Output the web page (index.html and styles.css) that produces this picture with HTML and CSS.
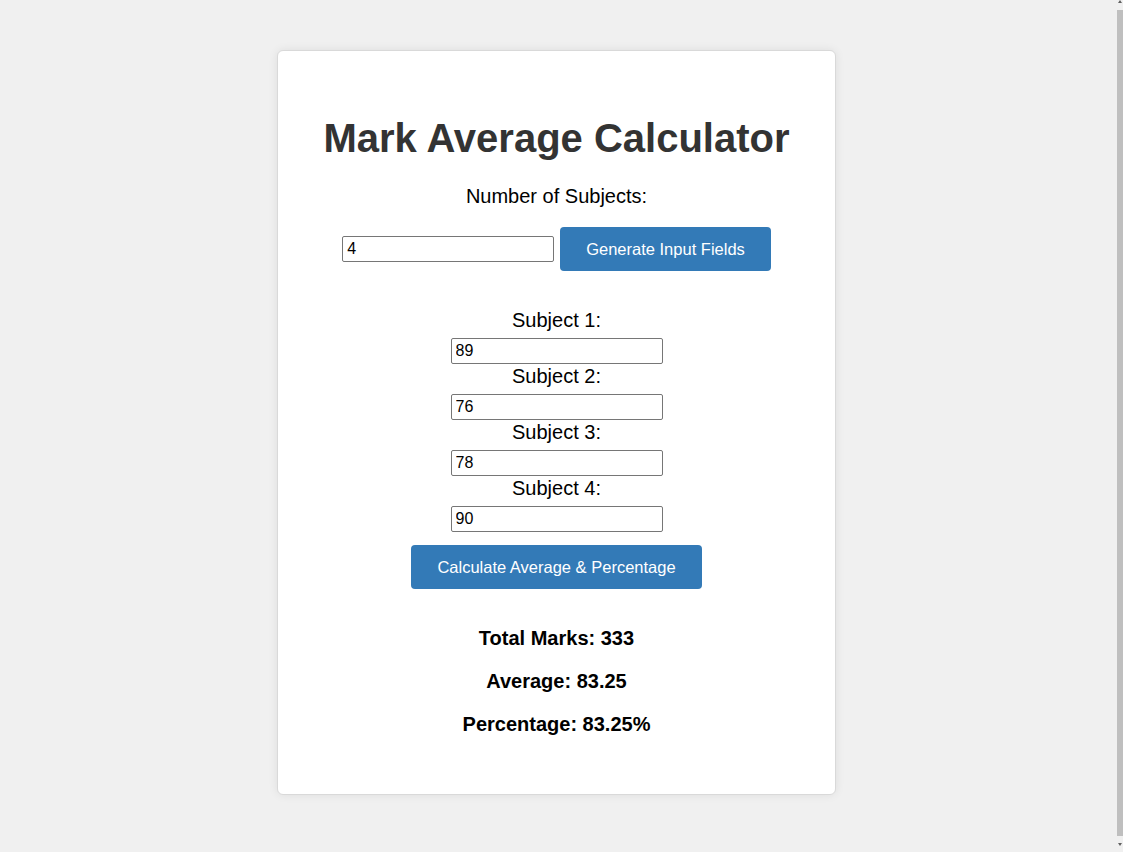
FILE: index.html
```html
<!DOCTYPE html>
<html lang="en">
<head>
<meta charset="utf-8">
<title>Mark Average Calculator</title>
<link rel="stylesheet" href="styles.css">
</head>
<body>
<div class="card">
  <h1 class="title">Mark Average Calculator</h1>
  <label class="count-label" for="count">Number of Subjects:</label>
  <div class="count-row">
    <input id="count" class="field field-count" type="text" value="4">
    <button class="btn btn-generate" type="button">Generate Input Fields</button>
  </div>
  <div class="subjects">
    <div class="subject">
      <label class="subject-label" for="s1">Subject 1:</label>
      <input id="s1" class="field" type="text" value="89">
    </div>
    <div class="subject">
      <label class="subject-label" for="s2">Subject 2:</label>
      <input id="s2" class="field" type="text" value="76">
    </div>
    <div class="subject">
      <label class="subject-label" for="s3">Subject 3:</label>
      <input id="s3" class="field" type="text" value="78">
    </div>
    <div class="subject">
      <label class="subject-label" for="s4">Subject 4:</label>
      <input id="s4" class="field" type="text" value="90">
    </div>
  </div>
  <button class="btn btn-calc" type="button">Calculate Average &amp; Percentage</button>
  <div class="results">
    <p class="result">Total Marks: 333</p>
    <p class="result">Average: 83.25</p>
    <p class="result">Percentage: 83.25%</p>
  </div>
</div>
<div class="scrollbar" aria-hidden="true">
  <div class="sb-btn sb-btn-up"><span class="sb-arrow-up"></span></div>
  <div class="sb-thumb"></div>
  <div class="sb-btn sb-btn-down"><span class="sb-arrow-down"></span></div>
</div>
</body>
</html>
```

FILE: styles.css
```css
html {
  overflow: hidden;
}

body {
  margin: 0;
  padding-right: 10px;
  background: #f0f0f0;
  font-family: "Liberation Sans", Arial, sans-serif;
  color: #000;
}

.card {
  box-sizing: border-box;
  width: 559px;
  margin: 50px auto 63px;
  padding: 40px 0 58px;
  background: #fff;
  border: 1px solid #d9d9d9;
  border-radius: 6px;
  box-shadow: 0 0 10px rgba(0, 0, 0, 0.08);
  display: flex;
  flex-direction: column;
  align-items: center;
  text-align: center;
}

.title {
  margin: 24px 0 0;
  font-size: 40px;
  font-weight: bold;
  color: #333;
  line-height: 46px;
}

.count-label {
  display: block;
  margin-top: 24px;
  font-size: 20px;
  line-height: 23px;
}

.count-row {
  margin-top: 19px;
  display: flex;
  align-items: center;
  gap: 6px;
}

.field {
  box-sizing: border-box;
  width: 212px;
  height: 26px;
  margin: 0;
  padding: 0 4px;
  border: 1px solid #767676;
  border-radius: 2px;
  font-family: "Liberation Sans", Arial, sans-serif;
  font-size: 16px;
  color: #000;
  background: #fff;
}

.btn {
  box-sizing: border-box;
  height: 44px;
  padding: 0 26px;
  border: none;
  border-radius: 4px;
  background: #337ab7;
  color: #fff;
  font-family: "Liberation Sans", Arial, sans-serif;
  font-size: 16.5px;
}

.subjects {
  margin-top: 38px;
  display: flex;
  flex-direction: column;
  align-items: center;
  gap: 1px;
}

.subject {
  display: flex;
  flex-direction: column;
  align-items: center;
  gap: 6px;
}

.subject-label {
  font-size: 20px;
  line-height: 23px;
}

.btn-calc {
  margin-top: 13px;
}

.results {
  margin-top: 38px;
  display: flex;
  flex-direction: column;
  align-items: center;
  gap: 20px;
}

.result {
  margin: 0;
  font-size: 20px;
  line-height: 23px;
  font-weight: bold;
}

/* imitation of the window's thin scrollbar */
.scrollbar {
  position: fixed;
  top: 0;
  right: 0;
  width: 10px;
  height: 100vh;
  background: #f0f0f0;
  display: flex;
  flex-direction: column;
  align-items: flex-end;
}

.sb-btn {
  width: 6px;
  display: flex;
  justify-content: center;
}

.sb-btn-up {
  height: 10px;
  align-items: flex-start;
}

.sb-btn-down {
  height: 16px;
  align-items: center;
}

.sb-arrow-up {
  width: 0;
  height: 0;
  border-left: 2px solid transparent;
  border-right: 2px solid transparent;
  border-bottom: 3px solid #606060;
}

.sb-arrow-down {
  width: 0;
  height: 0;
  border-left: 2px solid transparent;
  border-right: 2px solid transparent;
  border-top: 3px solid #606060;
}

.sb-thumb {
  width: 6px;
  height: 826px;
  background: #bfbfbf;
}
```
